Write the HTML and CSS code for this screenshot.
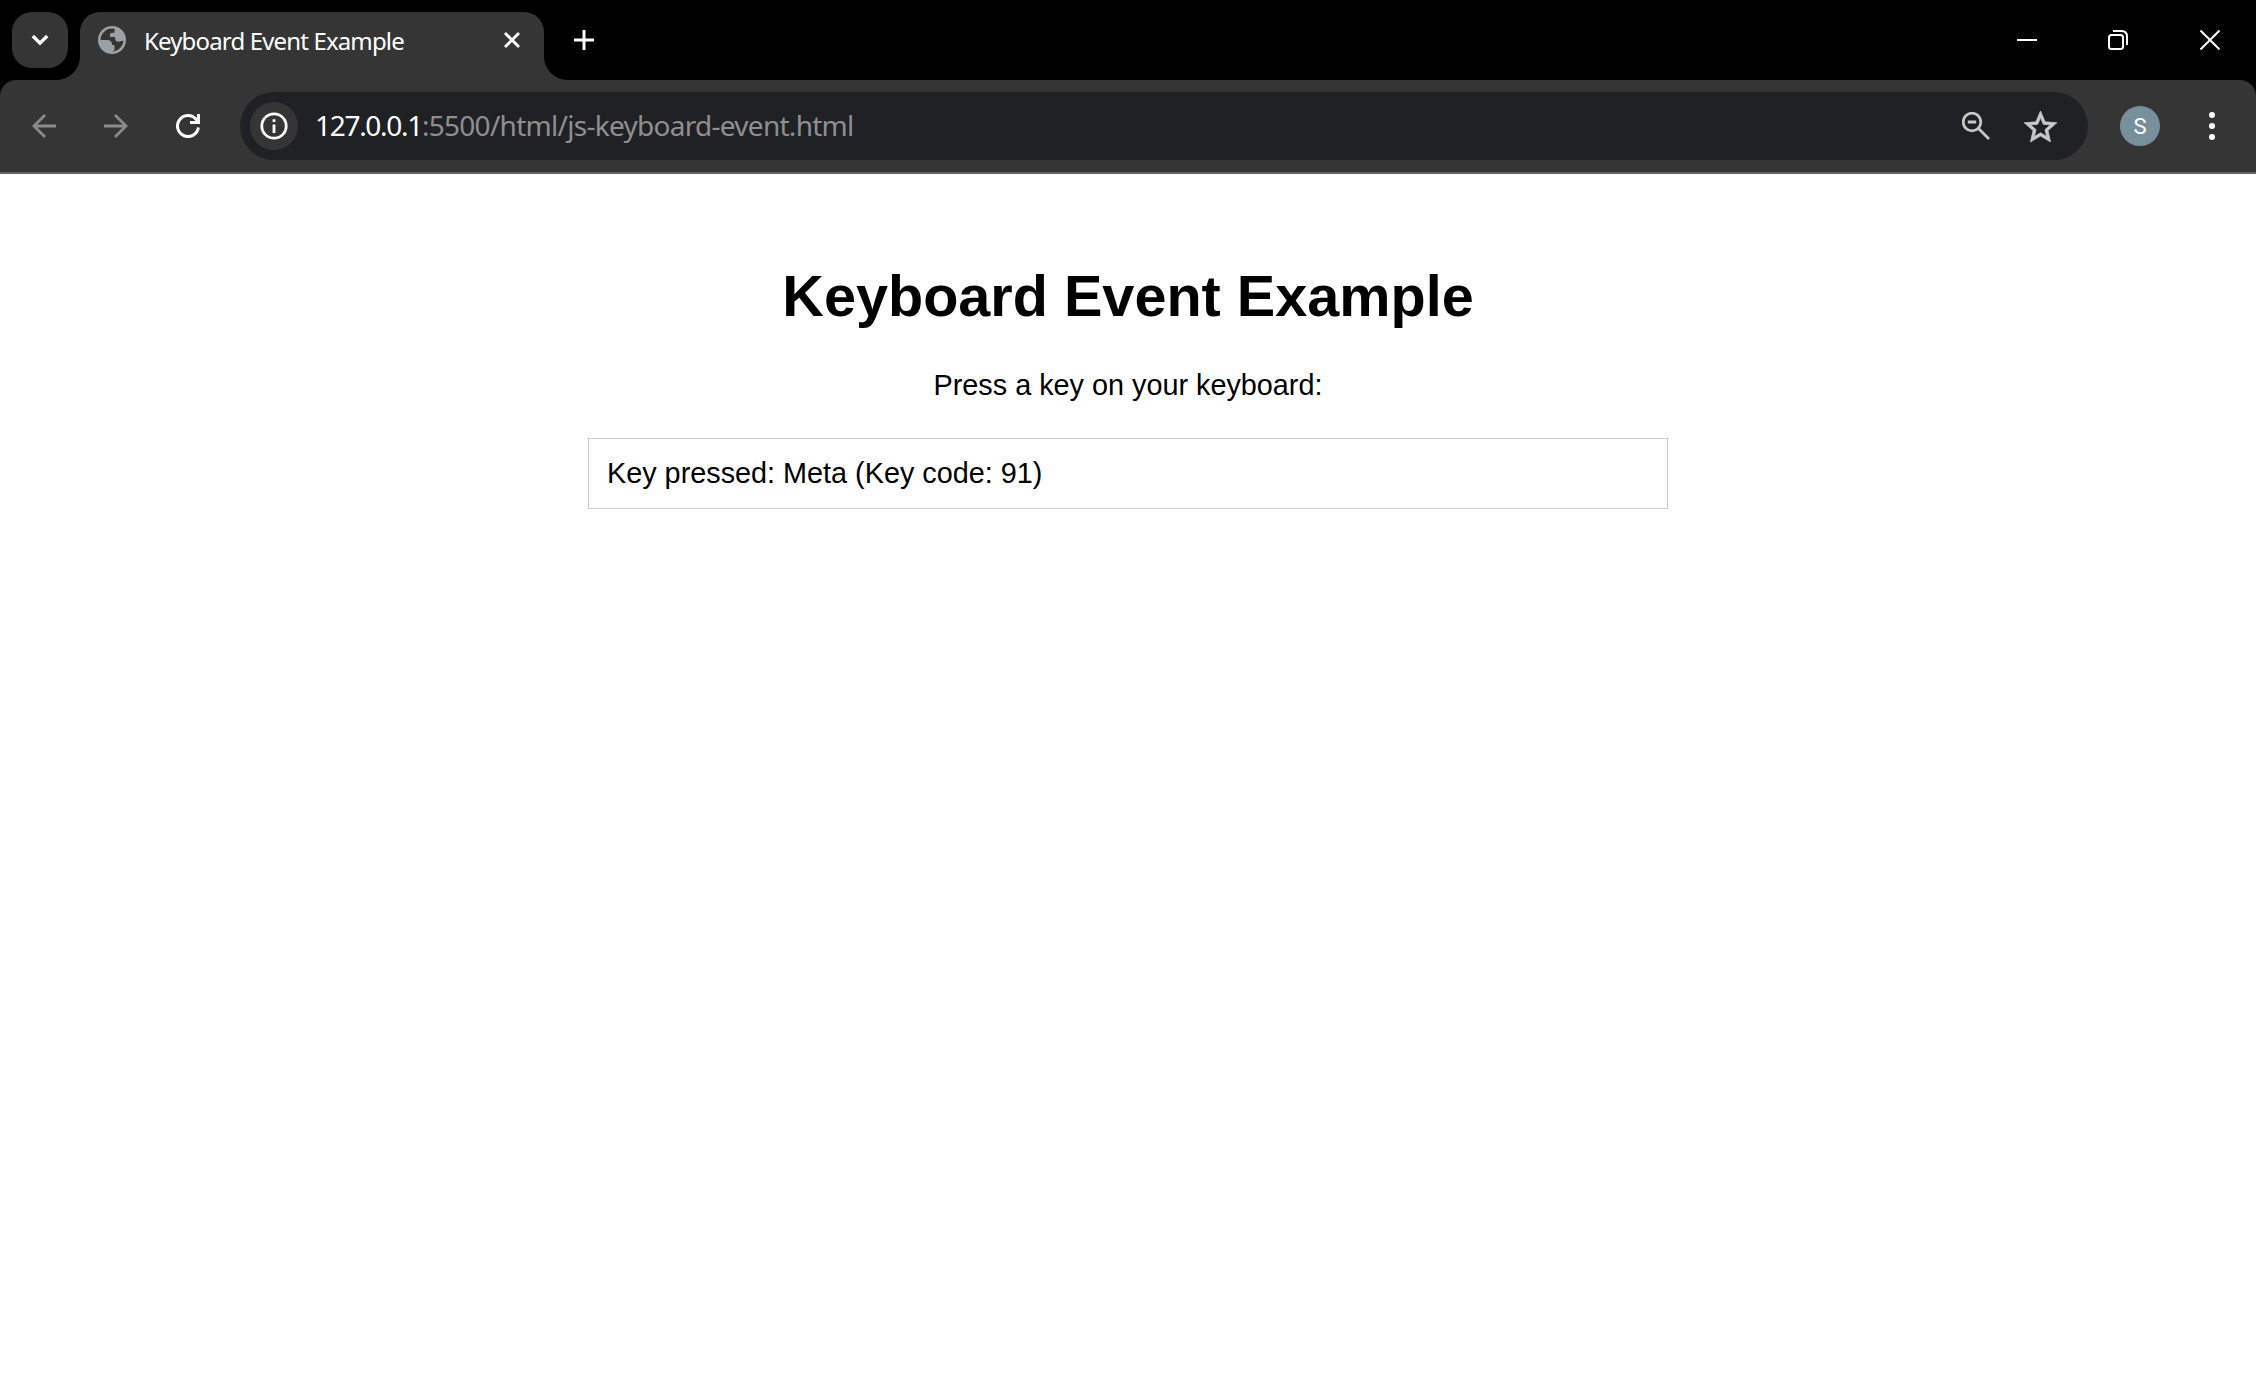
FILE: index.html
```html
<!DOCTYPE html>
<html lang="en">
<head>
<meta charset="utf-8">
<title>Keyboard Event Example</title>
<link rel="stylesheet" href="styles.css">
</head>
<body>
<div class="chrome">
<header class="tabstrip">
  <button class="tab-search" aria-label="Search tabs"><svg width="56" height="56" viewBox="0 0 56 56"><path d="M20.8 24 28 31.2 35.2 24" fill="none" stroke="#fff" stroke-width="3.4"/></svg></button>
  <div class="tab">
    <svg class="favicon" width="28" height="28" viewBox="0 0 28 28"><circle cx="14" cy="14" r="12.7" fill="none" stroke="#9aa0a6" stroke-width="2.6"/><path d="M1.5 14H9Q14 14 14 18.5V19H16.5V24L14 26Q8 28 3.5 21.5Q1.2 18 1.5 14ZM16.5 1.5Q22 2.5 24.5 7Q27.5 12 26 15H23Q20 17 17.5 14.2L16.8 11H12V9Q12 6.8 14.2 6.8H16.5Z" fill="#9aa0a6"/></svg>
    <span class="tab-title">Keyboard Event Example</span>
    <svg class="tab-close" width="20" height="20" viewBox="0 0 20 20"><path d="M3 3 17 17M17 3 3 17" stroke="#fff" stroke-width="3"/></svg>
  </div>
  <svg class="new-tab" width="20" height="20" viewBox="0 0 20 20"><path d="M0 10H20M10 0V20" stroke="#fff" stroke-width="3"/></svg>
  <div class="window-controls">
    <svg width="20" height="20" viewBox="0 0 20 20"><path d="M0 10H20" stroke="#fff" stroke-width="2"/></svg>
    <svg class="restore" width="20" height="20" viewBox="0 0 20 20" fill="none" stroke="#fff" stroke-width="2"><rect x="1" y="5" width="14" height="14" rx="2.5"/><path d="M5 1H13.5Q19 1 19 6.5V15"/></svg>
    <svg width="20" height="20" viewBox="0 0 20 20"><path d="M.5 .5 19.5 19.5M19.5 .5 .5 19.5" stroke="#fff" stroke-width="2"/></svg>
  </div>
</header>
<nav class="toolbar">
  <div class="nav-buttons">
    <svg width="24" height="24" viewBox="0 0 24 24" fill="none" stroke="#8b8b8b" stroke-width="2.8"><path d="M24 12H2M13 1 2 12 13 23"/></svg>
    <svg width="24" height="24" viewBox="0 0 24 24" fill="none" stroke="#8b8b8b" stroke-width="2.8"><path d="M0 12H22M11 1 22 12 11 23"/></svg>
    <svg width="26" height="24" viewBox="0 0 26 24" fill="none" stroke="#fff" stroke-width="3"><path d="M22.4 13.5A10.5 10.5 0 1 1 20 5.2L22 8M22.5 0V8.5H14"/></svg>
  </div>
  <div class="omnibox">
    <span class="site-info"><svg width="28" height="28" viewBox="0 0 28 28"><circle cx="14" cy="14" r="12.2" fill="none" stroke="#fff" stroke-width="2.8"/><path d="M12.6 7.3H15.4V10H12.6ZM12.6 12.5H15.4V21H12.6Z" fill="#fff"/></svg></span>
    <span class="url"><span class="host">127.0.0.1</span><span class="path">:5500/html/js-keyboard-event.html</span></span>
    <svg class="zoom-icon" width="28" height="28" viewBox="0 0 28 28" fill="none" stroke="#c7c7c7" stroke-width="2.8"><circle cx="10" cy="10" r="8.8"/><path d="M16 16 27 27M5.8 10H14.2"/></svg>
    <svg class="star-icon" width="33" height="31" viewBox="2 2 20 19"><path fill="#c7c7c7" stroke="#c7c7c7" stroke-width=".5" d="M22 9.24l-7.19-.62L12 2 9.19 8.63 2 9.24l5.46 4.73L5.82 21 12 17.27 18.18 21l-1.63-7.03L22 9.24zM12 15.4l-3.76 2.27 1-4.28-3.32-2.88 4.38-.38L12 6.1l1.71 4.04 4.38.38-3.32 2.88 1 4.28L12 15.4z"/></svg>
  </div>
  <span class="avatar">S</span>
  <svg class="menu" width="6" height="28" viewBox="0 0 6 28" fill="#fff"><circle cx="3" cy="3" r="3"/><circle cx="3" cy="14" r="3"/><circle cx="3" cy="25" r="3"/></svg>
</nav>
</div>
<main class="page">
  <h1 class="heading">Keyboard Event Example</h1>
  <p class="prompt">Press a key on your keyboard:</p>
  <div class="output">Key pressed: Meta (Key code: 91)</div>
</main>
</body>
</html>
```
FILE: styles.css
```css
* { box-sizing: border-box; }
body { margin: 0; height: 1380px; background: #fff; overflow: hidden; }
svg { display: block; flex: none; }
.chrome { background: #000; }
.tabstrip { height: 80px; display: flex; align-items: center; padding: 0 36px 0 12px; }
.tab-search { width: 56px; height: 56px; padding: 0; border: 0; border-radius: 20px; background: #353535; }
.tab { position: relative; align-self: flex-end; width: 464px; height: 68px; margin-left: 12px; padding: 0 22px 12px 18px; background: #353535; border-radius: 20px 20px 0 0; display: flex; align-items: center; }
.tab::before, .tab::after { content: ""; position: absolute; bottom: 0; width: 24px; height: 24px; }
.tab::before { left: -24px; background: radial-gradient(circle at 0 0, transparent 23.5px, #353535 24.5px); }
.tab::after { right: -24px; background: radial-gradient(circle at 100% 0, transparent 23.5px, #353535 24.5px); }
.tab-title { margin-left: 18px; padding-top: 2px; flex: 1; font: 24px/32px "Noto Sans", sans-serif; letter-spacing: -0.85px; color: #fff; white-space: nowrap; }
.new-tab { margin-left: 30px; }
.window-controls { margin-left: auto; width: 203px; display: flex; justify-content: space-between; }
.restore { margin-right: 1px; }
.toolbar { height: 94px; display: flex; align-items: center; padding: 0 41px 0 32px; background: #353535; border-bottom: 2px solid #616161; border-radius: 16px 16px 0 0; }
.nav-buttons { display: flex; width: 208px; gap: 48px; }
.omnibox { width: 1848px; height: 68px; border-radius: 34px; background: #202124; display: flex; align-items: center; padding: 0 31px 0 10px; }
.site-info { width: 48px; height: 48px; border-radius: 50%; background: #353535; display: flex; align-items: center; justify-content: center; }
.url { margin-left: 17px; padding-bottom: 1px; flex: 1; font: 28px/39px "Noto Sans", sans-serif; letter-spacing: -0.72px; color: #fff; white-space: nowrap; }
.host { letter-spacing: -1.3px; }
.path { color: #8f8f8f; }
.star-icon { margin-left: 34px; }
.avatar { width: 40px; height: 40px; margin-left: 32px; border-radius: 50%; background: #78909c; color: #fff; font: 22px/41px Roboto, sans-serif; text-align: center; }
.menu { margin-left: auto; }
.page { width: 1080px; margin: 0 auto; padding-top: 89px; font: 28.8px/33px "Liberation Sans", Arial, sans-serif; color: #000; }
.heading { margin: 0; font-size: 57.6px; line-height: 66px; text-align: center; }
.prompt { margin: 40px 0 36px; text-align: center; }
.output { height: 71px; padding: 18px; border: 1px solid #ccc; }
```
